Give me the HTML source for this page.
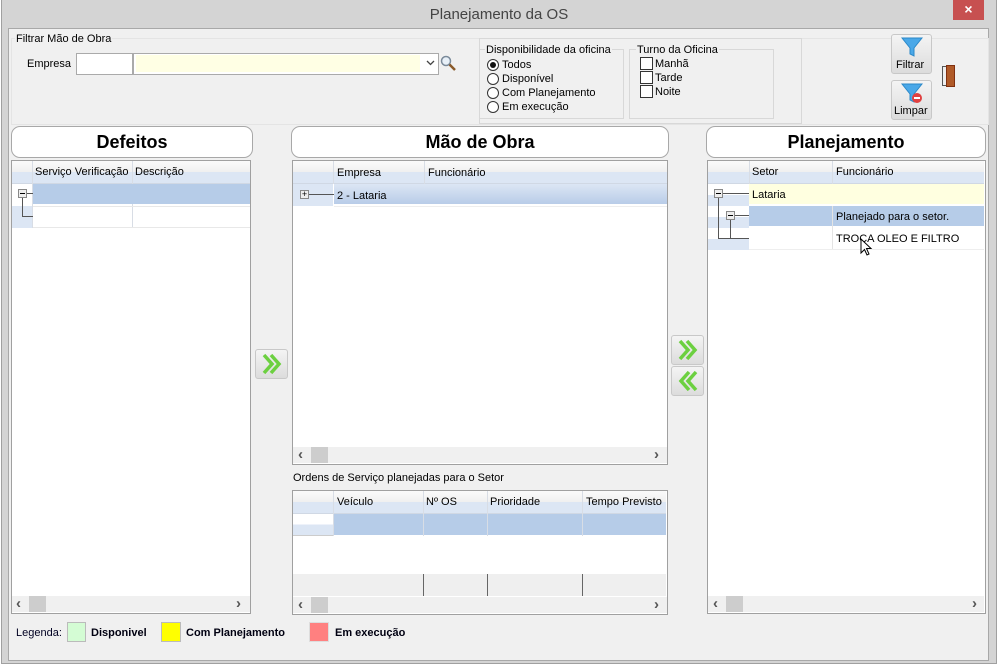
<!DOCTYPE html>
<html><head><meta charset="utf-8">
<style>
*{box-sizing:border-box;margin:0;padding:0}
body{width:998px;height:672px;background:#fff;font-family:"Liberation Sans",Tahoma,sans-serif;font-size:11px;color:#000;position:relative;overflow:hidden}
.a{position:absolute}
.t{margin-top:1px}
.frame{left:1px;top:0;width:996px;height:664px;background:#d4d4d4;border:1px solid #a0a0a0;border-top:none}
.client{left:8px;top:28px;width:981px;height:633px;background:#f0f0f0;border:1px solid #a8a8a8}
.title{left:0;top:6px;width:998px;text-align:center;font-size:15px;color:#444}
.close{left:953px;top:0;width:31px;height:20px;background:#c75050;color:#fff;text-align:center;font-size:14px;line-height:19px;font-weight:bold}
.grp{border:1px solid #d8d8d8}
.lbl{background:#f0f0f0;padding:0 1px}
.hdr{background:#fff;border:1px solid #a8a8a8;border-radius:9px;text-align:center;font-weight:bold;font-size:18px;line-height:30px;font-family:"Liberation Sans Narrow","Liberation Sans",sans-serif}
.grid{background:#fff;border:1px solid #a0a0a0}
.gh{background:linear-gradient(#fafafa,#f0f0f0 50%,#dce6f4 51%,#dce6f4);border-bottom:1px solid #d0d8e4}
.cl{border-left:1px solid #d8dde5}
.sel{background:#b6cce8}
.sb{background:#f0f0f0;height:16px}
.thumb{background:#cdcdcd;width:17px;height:16px}
.arrow{color:#555;font-size:15px;font-weight:bold;line-height:14px}
.btn{background:linear-gradient(#f4f4f4,#dcdcdc);border:1px solid #c8c8c8;border-radius:3px}
.radio{width:12px;height:12px;border:1px solid #333;border-radius:50%;background:#fff}
.chk{width:13px;height:13px;border:1px solid #333;background:#fff}
.rowsel{background:linear-gradient(#dce6f4,#b8cce8)}
</style></head><body>
<div class="a frame"></div>
<div class="a title">Planejamento da OS</div>
<div class="a close">×</div>
<div class="a client"></div>

<div class="a grp" style="left:11px;top:38px;width:978px;height:87px;border-color:#e4e4e4"></div>
<div class="a lbl" style="left:15px;top:33px">Filtrar Mão de Obra</div>
<div class="a" style="left:27px;top:58px">Empresa</div>
<div class="a" style="left:76px;top:53px;width:57px;height:22px;background:#fff;border:1px solid #aaa"></div>
<div class="a" style="left:133px;top:53px;width:306px;height:22px;background:#fff;border:1px solid #aaa"></div>
<div class="a" style="left:136px;top:55px;width:284px;height:17px;background:#ffffe4"></div>
<svg class="a" style="left:426px;top:60px" width="9" height="6"><path d="M1 1 L4.5 4.5 L8 1" fill="none" stroke="#444" stroke-width="1.3"/></svg>
<svg class="a" style="left:440px;top:55px" width="17" height="17"><circle cx="6" cy="6" r="4.5" fill="#e8f0f8" stroke="#7a8a9a" stroke-width="1.5"/><line x1="9.5" y1="9.5" x2="15" y2="15" stroke="#8a5a2a" stroke-width="2.5"/></svg>

<div class="a grp" style="left:479px;top:38px;width:323px;height:86px"></div>
<div class="a grp" style="left:479px;top:49px;width:145px;height:70px"></div>
<div class="a lbl" style="left:485px;top:44px">Disponibilidade da oficina</div>
<div class="a radio" style="left:487px;top:59px"><div class="a" style="left:2px;top:2px;width:6px;height:6px;border-radius:50%;background:#111"></div></div>
<div class="a" style="left:502px;top:59px">Todos</div>
<div class="a radio" style="left:487px;top:73px"></div><div class="a" style="left:502px;top:73px">Disponível</div>
<div class="a radio" style="left:487px;top:87px"></div><div class="a" style="left:502px;top:87px">Com Planejamento</div>
<div class="a radio" style="left:487px;top:101px"></div><div class="a" style="left:502px;top:101px">Em execução</div>

<div class="a grp" style="left:629px;top:49px;width:145px;height:70px"></div>
<div class="a lbl" style="left:636px;top:44px">Turno da Oficina</div>
<div class="a chk" style="left:640px;top:57px"></div><div class="a" style="left:655px;top:58px">Manhã</div>
<div class="a chk" style="left:640px;top:71px"></div><div class="a" style="left:655px;top:72px">Tarde</div>
<div class="a chk" style="left:640px;top:85px"></div><div class="a" style="left:655px;top:86px">Noite</div>

<div class="a btn" style="left:891px;top:34px;width:41px;height:40px"></div>
<svg class="a" style="left:901px;top:36px" width="22" height="22"><path d="M1 2 H21 L13 12 V20 L9 18 V12 Z" fill="#4aa8e8" stroke="#2a88c8"/></svg>
<div class="a" style="left:896px;top:59px;font-size:11px">Filtrar</div>
<div class="a btn" style="left:891px;top:80px;width:41px;height:40px"></div>
<svg class="a" style="left:901px;top:82px" width="22" height="22"><path d="M1 2 H21 L13 12 V20 L9 18 V12 Z" fill="#4aa8e8" stroke="#2a88c8"/><circle cx="16" cy="16" r="5" fill="#e04040"/><rect x="13" y="15" width="6" height="2" fill="#fff"/></svg>
<div class="a" style="left:894px;top:105px;font-size:11px">Limpar</div>
<div class="a" style="left:942px;top:66px;width:5px;height:20px;border:1px solid #555;background:#eee"></div>
<div class="a" style="left:946px;top:65px;width:9px;height:22px;background:#b05a28;border:1px solid #803010"></div>

<div class="a hdr" style="left:11px;top:126px;width:242px;height:32px">Defeitos</div>
<div class="a grid" style="left:11px;top:160px;width:240px;height:454px"></div>
<div class="a gh" style="left:12px;top:161px;width:238px;height:23px"></div>
<div class="a cl" style="left:32px;top:161px;height:67px"></div>
<div class="a cl" style="left:132px;top:161px;height:67px"></div>
<div class="a" style="left:35px;top:166px">Serviço Verificação</div>
<div class="a" style="left:135px;top:166px">Descrição</div>
<div class="a sel" style="left:33px;top:184px;width:217px;height:20px"></div>
<div class="a" style="left:12px;top:184px;width:20px;height:44px;background:linear-gradient(#fff,#fff 50%,#dce6f4 50%)"></div>
<div class="a" style="left:33px;top:206px;width:217px;height:1px;background:#e8e8e8"></div>
<div class="a" style="left:33px;top:227px;width:217px;height:1px;background:#e8e8e8"></div>
<div class="a" style="left:18px;top:189px;width:9px;height:9px;border:1px solid #888;background:#eee"></div>
<div class="a" style="left:20px;top:193px;width:5px;height:1px;background:#000"></div>
<div class="a" style="left:27px;top:193px;width:6px;height:1px;background:#555"></div>
<div class="a" style="left:22px;top:198px;width:1px;height:18px;background:#555"></div>
<div class="a" style="left:22px;top:216px;width:11px;height:1px;background:#555"></div>
<div class="a sb" style="left:12px;top:596px;width:238px"></div>
<div class="a thumb" style="left:29px;top:596px"></div>
<div class="a arrow" style="left:16px;top:597px">&lsaquo;</div><div class="a arrow" style="left:236px;top:597px">&rsaquo;</div>

<div class="a btn" style="left:255px;top:349px;width:33px;height:30px"></div>
<svg class="a" style="left:261px;top:352px" width="22" height="24"><path d="M3 3 L11 12 L3 21 M10 3 L18 12 L10 21" fill="none" stroke="#6cd040" stroke-width="3.5"/></svg>

<div class="a hdr" style="left:291px;top:126px;width:378px;height:32px">Mão de Obra</div>
<div class="a grid" style="left:292px;top:160px;width:376px;height:305px"></div>
<div class="a gh" style="left:293px;top:161px;width:374px;height:23px"></div>
<div class="a cl" style="left:333px;top:161px;height:23px"></div>
<div class="a cl" style="left:424px;top:161px;height:23px"></div>
<div class="a" style="left:337px;top:167px">Empresa</div>
<div class="a" style="left:428px;top:167px">Funcionário</div>
<div class="a rowsel" style="left:334px;top:184px;width:333px;height:20px"></div>
<div class="a" style="left:293px;top:184px;width:40px;height:22px;background:#dce6f4"></div>
<div class="a" style="left:300px;top:190px;width:9px;height:9px;border:1px solid #888;background:#eee;font-size:9px;line-height:7px;text-align:center">+</div>
<div class="a" style="left:309px;top:194px;width:25px;height:1px;background:#555"></div>
<div class="a" style="left:337px;top:190px">2 - Lataria</div>
<div class="a" style="left:334px;top:206px;width:333px;height:1px;background:#eee"></div>
<div class="a sb" style="left:293px;top:447px;width:374px"></div>
<div class="a thumb" style="left:311px;top:447px"></div>
<div class="a arrow" style="left:298px;top:448px">&lsaquo;</div><div class="a arrow" style="left:654px;top:448px">&rsaquo;</div>
<div class="a" style="left:292px;top:464px;width:376px;height:1px;background:#a0a0a0"></div>
<div class="a" style="left:293px;top:472px">Ordens de Serviço planejadas para o Setor</div>
<div class="a grid" style="left:292px;top:490px;width:376px;height:125px"></div>
<div class="a gh" style="left:293px;top:491px;width:373px;height:23px"></div>
<div class="a" style="left:334px;top:514px;width:332px;height:21px;background:#b6cce8"></div>
<div class="a" style="left:293px;top:514px;width:40px;height:22px;background:linear-gradient(#fff,#fff 50%,#dce6f4 50%);border-bottom:1px solid #ccc"></div>
<div class="a cl" style="left:333px;top:491px;height:45px"></div>
<div class="a cl" style="left:423px;top:491px;height:45px"></div>
<div class="a cl" style="left:487px;top:491px;height:45px"></div>
<div class="a cl" style="left:582px;top:491px;height:45px"></div>
<div class="a" style="left:337px;top:496px">Veículo</div>
<div class="a" style="left:426px;top:496px">Nº OS</div>
<div class="a" style="left:490px;top:496px">Prioridade</div>
<div class="a" style="left:586px;top:496px">Tempo Previsto</div>
<div class="a" style="left:293px;top:574px;width:373px;height:22px;background:#efefef"></div>
<div class="a" style="left:423px;top:574px;width:1px;height:22px;background:#666"></div>
<div class="a" style="left:487px;top:574px;width:1px;height:22px;background:#666"></div>
<div class="a" style="left:582px;top:574px;width:1px;height:22px;background:#666"></div>
<div class="a sb" style="left:293px;top:597px;width:374px"></div>
<div class="a thumb" style="left:311px;top:597px"></div>
<div class="a arrow" style="left:298px;top:598px">&lsaquo;</div><div class="a arrow" style="left:654px;top:598px">&rsaquo;</div>

<div class="a btn" style="left:671px;top:335px;width:33px;height:30px"></div>
<svg class="a" style="left:677px;top:338px" width="22" height="24"><path d="M3 3 L11 12 L3 21 M10 3 L18 12 L10 21" fill="none" stroke="#6cd040" stroke-width="3.5"/></svg>
<div class="a btn" style="left:671px;top:366px;width:33px;height:30px"></div>
<svg class="a" style="left:677px;top:369px" width="22" height="24"><path d="M19 3 L11 12 L19 21 M12 3 L4 12 L12 21" fill="none" stroke="#6cd040" stroke-width="3.5"/></svg>

<div class="a hdr" style="left:706px;top:126px;width:280px;height:32px">Planejamento</div>
<div class="a grid" style="left:707px;top:160px;width:279px;height:454px"></div>
<div class="a gh" style="left:708px;top:161px;width:276px;height:23px"></div>
<div class="a cl" style="left:749px;top:161px;height:23px"></div>
<div class="a cl" style="left:832px;top:161px;height:23px"></div>
<div class="a" style="left:752px;top:166px">Setor</div>
<div class="a" style="left:836px;top:166px">Funcionário</div>
<div class="a" style="left:708px;top:184px;width:41px;height:66px;background:repeating-linear-gradient(#fff 0,#fff 11px,#dce6f4 11px,#dce6f4 22px)"></div>
<div class="a" style="left:749px;top:184px;width:235px;height:20px;background:#ffffe0"></div>
<div class="a" style="left:752px;top:189px">Lataria</div>
<div class="a sel" style="left:749px;top:206px;width:235px;height:20px"></div>
<div class="a cl" style="left:832px;top:206px;height:44px;border-color:#e4e4e4"></div>
<div class="a" style="left:836px;top:211px">Planejado para o setor.</div>
<div class="a" style="left:749px;top:249px;width:235px;height:1px;background:#eee"></div>
<div class="a" style="left:836px;top:233px">TROCA OLEO E FILTRO</div>
<div class="a" style="left:714px;top:189px;width:9px;height:9px;border:1px solid #888;background:#eee"></div>
<div class="a" style="left:716px;top:193px;width:5px;height:1px;background:#000"></div>
<div class="a" style="left:723px;top:193px;width:26px;height:1px;background:#555"></div>
<div class="a" style="left:718px;top:198px;width:1px;height:40px;background:#555"></div>
<div class="a" style="left:718px;top:238px;width:31px;height:1px;background:#555"></div>
<div class="a" style="left:726px;top:211px;width:9px;height:9px;border:1px solid #888;background:#eee"></div>
<div class="a" style="left:728px;top:215px;width:5px;height:1px;background:#000"></div>
<div class="a" style="left:735px;top:215px;width:14px;height:1px;background:#555"></div>
<div class="a" style="left:730px;top:220px;width:1px;height:18px;background:#555"></div>
<svg class="a" style="left:860px;top:238px" width="14" height="20"><path d="M1 1 V15 L4.5 11.5 L7 17 L9 16 L6.5 10.5 H11 Z" fill="#fff" stroke="#000"/></svg>
<div class="a sb" style="left:708px;top:596px;width:276px"></div>
<div class="a thumb" style="left:726px;top:596px"></div>
<div class="a arrow" style="left:713px;top:597px">&lsaquo;</div><div class="a arrow" style="left:972px;top:597px">&rsaquo;</div>

<div class="a" style="left:16px;top:627px;color:#002">Legenda:</div>
<div class="a" style="left:67px;top:622px;width:19px;height:20px;background:#d4fcd4;border:1px solid #bbb"></div>
<div class="a" style="left:91px;top:627px;font-weight:bold;color:#001">Disponivel</div>
<div class="a" style="left:161px;top:622px;width:20px;height:20px;background:#ffff00;border:1px solid #bbb"></div>
<div class="a" style="left:186px;top:627px;font-weight:bold;color:#001">Com Planejamento</div>
<div class="a" style="left:309px;top:622px;width:20px;height:20px;background:#ff8080;border:1px solid #ddd"></div>
<div class="a" style="left:335px;top:627px;font-weight:bold;color:#001">Em execução</div>
</body></html>
